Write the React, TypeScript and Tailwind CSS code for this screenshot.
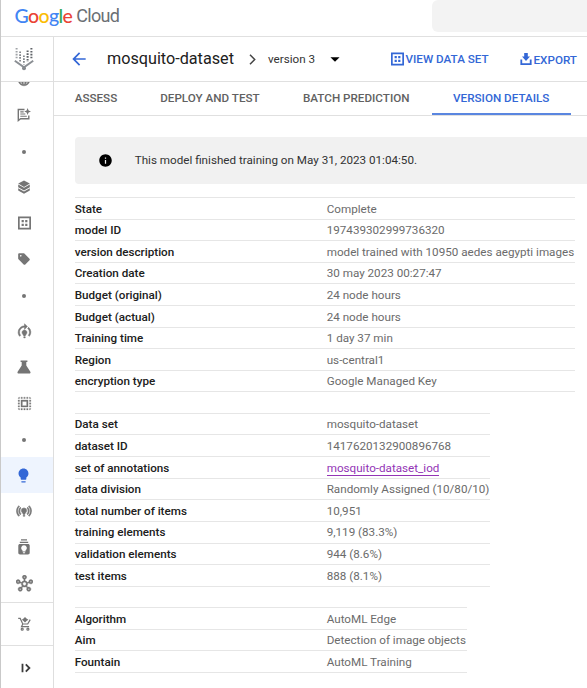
import React from "react";
import {
  MdArrowBack,
  MdArrowDropDown,
  MdInfo,
  MdLanguage,
  MdLightbulb,
  MdModelTraining,
  MdOnlinePrediction,
  MdOutlineHub,
  MdSelectAll,
  MdSell,
} from "react-icons/md";

type Row = { label: string; value: string; link?: boolean };

const modelRows: Row[] = [
  { label: "State", value: "Complete" },
  { label: "model ID", value: "197439302999736320" },
  { label: "version description", value: "model trained with 10950 aedes aegypti images" },
  { label: "Creation date", value: "30 may 2023 00:27:47" },
  { label: "Budget (original)", value: "24 node hours" },
  { label: "Budget (actual)", value: "24 node hours" },
  { label: "Training time", value: "1 day 37 min" },
  { label: "Region", value: "us-central1" },
  { label: "encryption type", value: "Google Managed Key" },
];

const dataRows: Row[] = [
  { label: "Data set", value: "mosquito-dataset" },
  { label: "dataset ID", value: "1417620132900896768" },
  { label: "set of annotations", value: "mosquito-dataset_iod", link: true },
  { label: "data division", value: "Randomly Assigned (10/80/10)" },
  { label: "total number of items", value: "10,951" },
  { label: "training elements", value: "9,119 (83.3%)" },
  { label: "validation elements", value: "944 (8.6%)" },
  { label: "test items", value: "888 (8.1%)" },
];

const algorithmRows: Row[] = [
  { label: "Algorithm", value: "AutoML Edge" },
  { label: "Aim", value: "Detection of image objects" },
  { label: "Fountain", value: "AutoML Training" },
];

function DetailList({ rows, width }: { rows: Row[]; width: string }) {
  return (
    <dl className={`${width} border-t border-[#e6e6e6]`}>
      {rows.map((r) => (
        <div key={r.label} className="flex h-[21.62px] items-center border-b border-[#e6e6e6] pt-[2px]">
          <dt className="w-[252px] shrink-0 font-medium text-[#202020]">{r.label}</dt>
          <dd className="text-[#6b6b6b]">
            {r.link ? (
              <a className="block border-b border-[#9334b5] leading-[14px] text-[#9334b5]">{r.value}</a>
            ) : (
              r.value
            )}
          </dd>
        </div>
      ))}
    </dl>
  );
}

function VertexLogo() {
  return (
    <svg width="20" height="24" viewBox="0 0 20 24" fill="none" stroke="#777b80">
      <path d="M.8 13.8 10 20.2l9.2-6.4" strokeWidth="2" stroke="#8b8f94" />
      <circle cx="10" cy="21.2" r="2" fill="#868a8f" stroke="none" />
      <path d="M2.6 1v11.5" strokeWidth="2" strokeDasharray="1.6 1.3" stroke="#a0a3a7" />
      <path d="M17.4 1v11.5" strokeWidth="2" strokeDasharray="1.6 1.3" stroke="#5f6368" />
      <path d="M6.1 4.5v10.5" strokeWidth="1.6" strokeDasharray="1.6 1.2" />
      <path d="M13.6 3.5v11.5" strokeWidth="2" strokeDasharray="1.6 1.2" stroke="#5f6368" />
      <path d="M9.9 8.5v9" strokeWidth="1.6" strokeDasharray="1.6 1.2" />
    </svg>
  );
}

function DatasetIcon() {
  return (
    <svg width="13" height="14" viewBox="0 0 13 14" className="shrink-0" fill="currentColor">
      <path
        fillRule="evenodd"
        d="M0 .5h13v13H0zM1.7 2.2v9.6h9.6V2.2zM3.6 4.1h2.2v2.2H3.6zM7.2 4.1h2.2v2.2H7.2zM3.6 7.7h2.2v2.2H3.6zM7.2 7.7h2.2v2.2H7.2z"
      />
    </svg>
  );
}

function NotesIcon() {
  return (
    <svg width="14" height="14" viewBox="0 0 14 14" fill="none" stroke="currentColor" strokeWidth="1.4">
      <path d="M7.5 1.5H1.3v11L3.6 10.7h8.2V7.5" />
      <path d="M3.3 3.9h3.4M3.3 6h5M3.3 8.2h6.5" strokeWidth="1.1" />
      <path d="M10.6 0l1 2.5 2.4 1-2.4 1-1 2.5-1-2.5-2.4-1 2.4-1z" fill="currentColor" stroke="none" />
    </svg>
  );
}

function StackIcon() {
  return (
    <svg width="12" height="14" viewBox="0 0 12 14" fill="currentColor">
      <path d="M6 .4 11.8 3.6 6 6.9.2 3.6z" />
      <path d="M.2 4.6 6 7.8 11.8 4.6v2.6L6 10.4.2 7.2z" />
      <path d="M.2 8.2 6 11.4l5.8-3.2v2.3L6 13.8.2 10.5z" />
    </svg>
  );
}

function FlaskIcon() {
  return (
    <svg width="14" height="14" viewBox="0 0 14 14" fill="currentColor">
      <path d="M3.6.4h6.8v1.5H9.3v3.5l3.9 6c.8 1.1.2 2.2-1 2.2H1.8c-1.2 0-1.8-1.1-1-2.2l3.9-6V1.9H3.6z" />
    </svg>
  );
}

function BatchIcon() {
  return (
    <svg width="12" height="16" viewBox="0 0 12 16" fill="currentColor">
      <path d="M3 .3h6v1.3H3zM1.8 2.7h8.4V4H1.8z" />
      <path
        fillRule="evenodd"
        d="M2 5h8c1 0 1.7.7 1.7 1.7v7.1c0 1-.7 1.7-1.7 1.7H2c-1 0-1.7-.7-1.7-1.7V6.7C.3 5.7 1 5 2 5zM6 6.3a2.8 2.8 0 0 0-1.5 5.2v1h3v-1A2.8 2.8 0 0 0 6 6.3zM4.9 13.2v1h2.2v-1z"
      />
    </svg>
  );
}

function CartIcon() {
  return (
    <svg width="13" height="14" viewBox="0 0 13 14" fill="none" stroke="currentColor" strokeWidth="1.2">
      <path d="M.2 1.4h2l2.6 5.6h4.9l2.5-4.4M4.8 7 3.5 9.7h7.6" />
      <path d="M7 0l1.5 1.5 1.9 1.3-1.9 1.3L7 5.6 5.5 4.1 3.9 2.8l1.6-1.3z" fill="currentColor" stroke="none" />
      <circle cx="4.2" cy="12.2" r="1" />
      <circle cx="9.9" cy="12.2" r="1" />
    </svg>
  );
}

function ExportIcon() {
  return (
    <svg width="12" height="14" viewBox="0 0 12 14" className="shrink-0" fill="currentColor">
      <path d="M4.2 1h3.6v3.6H10L6 9 2 4.6h2.2z" />
      <path d="M.4 7.5h1.8v3.7h7.6V7.5h1.8V13H.4z" />
    </svg>
  );
}

function Dot() {
  return <span className="mt-[2px] size-1 rounded-full bg-[#757575]" />;
}

function NavItem({ children, active }: { children: React.ReactNode; active?: boolean }) {
  return (
    <div
      className={`flex h-9 shrink-0 items-center justify-center pr-[6px] ${
        active ? "bg-[#eef4fe] text-[#3367d6]" : "text-[#757575]"
      }`}
    >
      {children}
    </div>
  );
}

function Sidebar() {
  return (
    <aside className="flex w-[53px] shrink-0 flex-col border-r border-[#dedede]">
      <div className="flex h-[45px] shrink-0 items-center justify-center border-b border-[#e0e0e0] pr-[6px]">
        <VertexLogo />
      </div>
      <div className="flex h-[15px] shrink-0 items-start justify-center overflow-hidden pr-[6px] text-[#757575]">
        <MdLanguage size={14} className="-mt-[9px] shrink-0 stroke-[0.7] [&_[fill=none]]:hidden" />
      </div>
      <NavItem><NotesIcon /></NavItem>
      <NavItem><Dot /></NavItem>
      <NavItem><StackIcon /></NavItem>
      <NavItem><DatasetIcon /></NavItem>
      <NavItem><MdSell size={14} /></NavItem>
      <NavItem><Dot /></NavItem>
      <NavItem><MdModelTraining size={17} className="stroke-[0.7] [&_[fill=none]]:hidden" /></NavItem>
      <NavItem><FlaskIcon /></NavItem>
      <NavItem><MdSelectAll size={17} className="stroke-[0.4] [&_[fill=none]]:hidden" /></NavItem>
      <NavItem><Dot /></NavItem>
      <NavItem active><MdLightbulb size={17} className="mr-px" /></NavItem>
      <NavItem><MdOnlinePrediction size={18} className="stroke-[0.8] [&_[fill=none]]:hidden" /></NavItem>
      <NavItem><BatchIcon /></NavItem>
      <NavItem><MdOutlineHub size={17} className="stroke-[0.6] [&_[fill=none]]:hidden" /></NavItem>
      <div className="mt-px flex h-[44px] shrink-0 items-center justify-center border-y border-[#e0e0e0] pr-[5px] text-[#757575]">
        <CartIcon />
      </div>
      <div className="flex flex-1 items-center justify-center pr-[2px] pt-px text-[#3c3c3c]">
        <svg width="10" height="10" viewBox="0 0 10 10" fill="none" stroke="currentColor" strokeWidth="1.8">
          <path d="M1.5 .8v8.4M4.8 1.4 8.4 5 4.800 8.600" />
        </svg>
      </div>
    </aside>
  );
}

export default function App() {
  return (
    <div className="flex h-[688px] w-[587px] flex-col overflow-hidden border-l border-[#c9c9c9] bg-white font-['Roboto',sans-serif] text-[11.67px]">
      <header className="flex h-[37px] shrink-0 justify-between border-b border-[#e0e0e0]">
        <div className="flex items-center pb-[5px] pl-[13.5px] leading-none">
          <span className="font-['Lato',sans-serif] text-[19.5px] font-medium tracking-[-0.6px]">
            <span className="text-[#4285f4]">G</span>
            <span className="text-[#ea4335]">o</span>
            <span className="text-[#fbbc04]">o</span>
            <span className="text-[#4285f4]">g</span>
            <span className="text-[#34a853]">l</span>
            <span className="text-[#ea4335]">e</span>
          </span>
          <span className="ml-[4px] text-[18px] tracking-[-0.75px] text-[#6b6f74]">Cloud</span>
        </div>
        <div className="h-[31.5px] w-[155px] rounded-l-md bg-[#f3f3f3]" />
      </header>
      <div className="flex min-h-0 flex-1">
        <Sidebar />
        <main className="flex min-w-0 flex-1 flex-col">
          <div className="flex h-[45px] shrink-0 items-center border-b border-[#e0e0e0] text-[#3367d6]">
            <MdArrowBack size={20} className="ml-[15px] shrink-0" />
            <h1 className="ml-[18px] w-[127px] whitespace-nowrap pt-px text-[16.2px] text-[#202020]">mosquito-dataset</h1>
            <svg width="7" height="11" viewBox="0 0 7 11" className="ml-[15px] shrink-0" fill="none" stroke="#444" strokeWidth="1.5">
              <path d="M1 .8 5.7 5.5 1 10.2" />
            </svg>
            <span className="ml-[12px] w-[48px] whitespace-nowrap pt-px text-[#333]">version 3</span>
            <MdArrowDropDown size={22} className="ml-[8px] shrink-0 text-black" />
            <a className="ml-[45px] flex items-center whitespace-nowrap font-medium">
              <DatasetIcon />
              <span className="ml-[1.5px] w-[84px] pt-[2px]">VIEW DATA SET</span>
            </a>
            <a className="ml-[30px] flex items-center gap-[2px] whitespace-nowrap font-medium">
              <ExportIcon />
              <span className="pt-[4px]">EXPORT</span>
            </a>
          </div>
          <nav className="flex h-[34px] shrink-0 whitespace-nowrap border-b border-[#e0e0e0] font-medium leading-[32px] text-[#616161]">
            <span className="ml-[20.7px] w-[85.5px]">ASSESS</span>
            <span className="w-[142.8px]">DEPLOY AND TEST</span>
            <span className="w-[129px]">BATCH PREDICTION</span>
            <span className="w-[139.5px] border-b-2 border-[#5a86e0] pr-px text-center text-[#3367d6]">VERSION DETAILS</span>
          </nav>
          <section className="ml-[20.7px] mt-[21px] flex h-[47px] shrink-0 items-center rounded-l bg-[#f1f1f1]">
            <MdInfo size={15} className="ml-[23px] shrink-0 text-black" />
            <p className="ml-[22px] pt-px text-[#333]">This model finished training on May 31, 2023 01:04:50.</p>
          </section>
          <div className="ml-[20.7px] mt-[13px] flex flex-col gap-[20.4px] whitespace-nowrap">
            <DetailList rows={modelRows} width="w-[500px]" />
            <DetailList rows={dataRows} width="w-[415px]" />
            <DetailList rows={algorithmRows} width="w-[392px]" />
          </div>
        </main>
      </div>
    </div>
  );
}
